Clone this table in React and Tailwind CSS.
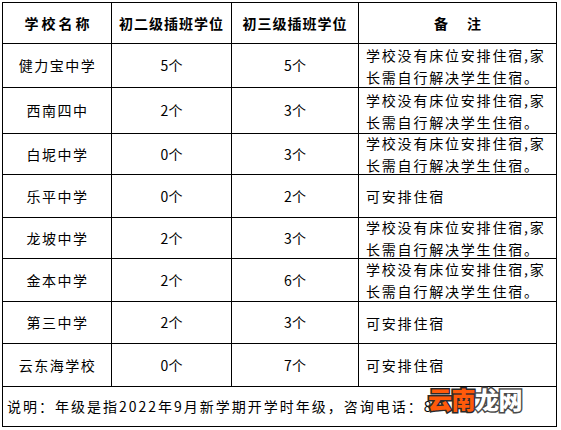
import React from "react";

const rows = [
  { name: "健力宝中学", a: "5个", b: "5个", note: ["学校没有床位安排住宿,家", "长需自行解决学生住宿。"] },
  { name: "西南四中", a: "2个", b: "3个", note: ["学校没有床位安排住宿,家", "长需自行解决学生住宿。"] },
  { name: "白坭中学", a: "0个", b: "3个", note: ["学校没有床位安排住宿,家", "长需自行解决学生住宿。"] },
  { name: "乐平中学", a: "0个", b: "2个", note: ["可安排住宿"] },
  { name: "龙坡中学", a: "2个", b: "3个", note: ["学校没有床位安排住宿,家", "长需自行解决学生住宿。"] },
  { name: "金本中学", a: "2个", b: "6个", note: ["学校没有床位安排住宿,家", "长需自行解决学生住宿。"] },
  { name: "第三中学", a: "2个", b: "3个", note: ["可安排住宿"] },
  { name: "云东海学校", a: "0个", b: "7个", note: ["可安排住宿"] },
];

const cell = "border-r border-b border-black flex items-center";

export default function App() {
  return (
    <div className="w-[561px] h-[430px] bg-white text-black pl-[2px] pt-[2px] font-['Noto_Sans_CJK_SC',sans-serif] text-[14px] overflow-hidden">
      <div className="grid grid-cols-[109px_120px_127px_198px] grid-rows-[41px_44px_46px_41px_43px_41px_43px_42px_43px_40px] border-l border-t border-black w-[555px]">
        <div className={`${cell} justify-center font-bold tracking-[3px] pl-[3px]`}>学校名称</div>
        <div className={`${cell} justify-center font-bold tracking-[1px]`}>初二级插班学位</div>
        <div className={`${cell} justify-center font-bold tracking-[1px]`}>初三级插班学位</div>
        <div className={`${cell} justify-center font-bold`}>
          <span>备</span>
          <span className="inline-block w-[19px]"></span>
          <span>注</span>
        </div>
        {rows.map((r) => (
          <React.Fragment key={r.name}>
            <div className={`${cell} justify-center tracking-[1.5px] pl-[1px]`}>{r.name}</div>
            <div className={`${cell} justify-center`}>{r.a}</div>
            <div className={`${cell} justify-center`}>{r.b}</div>
            <div className={`${cell} pl-[7px]`}>
              <div className="leading-[22px] tracking-[1.8px] whitespace-nowrap">
                {r.note.map((l, i) => (
                  <div key={i}>{l}</div>
                ))}
              </div>
            </div>
          </React.Fragment>
        ))}
        <div className={`${cell} col-span-4 pl-[4px] relative`}>
          <span className="tracking-[2px] whitespace-nowrap">说明：年级是指2022年9月新学期开学时年级，咨询电话：8</span>
          <div className="absolute left-[425px] top-[0px] text-[24px] leading-[24px] font-black tracking-[-0.5px] whitespace-nowrap [paint-order:stroke_fill]">
            <span className="text-[#ff5a0a] [-webkit-text-stroke:3px_#2a2a2a]">云南</span>
            <span className="text-white [-webkit-text-stroke:3px_#4a4a4a]">龙网</span>
          </div>
        </div>
      </div>
    </div>
  );
}
